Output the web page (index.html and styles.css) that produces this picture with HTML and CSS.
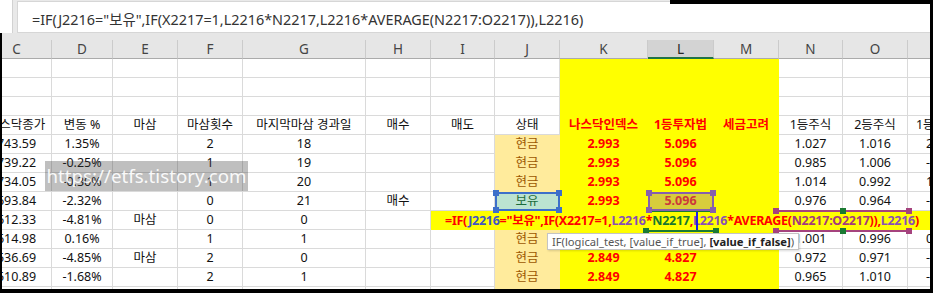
FILE: index.html
```html
<!DOCTYPE html>
<html lang="ko">
<head>
<meta charset="UTF-8">
<meta name="viewport" content="width=device-width, initial-scale=1.0">
<title>나스닥 1등투자법</title>
<link rel="stylesheet" href="styles.css">
</head>
<body>
<div class="screen">
  <div class="fbar">
    <div class="namebox"></div>
    <div class="fx">=IF(J2216="보유",IF(X2217=1,L2216*N2217,L2216*AVERAGE(N2217:O2217)),L2216)</div>
  </div>
  <div class="sheet-wrap">
    <div class="grid">
      <!-- column letters -->
      <div class="ch">C</div><div class="ch">D</div><div class="ch">E</div><div class="ch">F</div><div class="ch">G</div><div class="ch">H</div><div class="ch">I</div><div class="ch">J</div><div class="ch">K</div><div class="ch on">L</div><div class="ch">M</div><div class="ch">N</div><div class="ch">O</div><div class="ch">P</div>

      <!-- empty rows -->
      <div class="c"></div><div class="c"></div><div class="c"></div><div class="c"></div><div class="c"></div><div class="c"></div><div class="c"></div><div class="c"></div><div class="c y"></div><div class="c y"></div><div class="c y"></div><div class="c"></div><div class="c"></div><div class="c"></div>
      <div class="c"></div><div class="c"></div><div class="c"></div><div class="c"></div><div class="c"></div><div class="c"></div><div class="c"></div><div class="c"></div><div class="c y"></div><div class="c y"></div><div class="c y"></div><div class="c"></div><div class="c"></div><div class="c"></div>
      <div class="c"></div><div class="c"></div><div class="c"></div><div class="c"></div><div class="c"></div><div class="c"></div><div class="c"></div><div class="c"></div><div class="c y"></div><div class="c y"></div><div class="c y"></div><div class="c"></div><div class="c"></div><div class="c"></div>

      <!-- table header -->
      <div class="c">나스닥종가</div><div class="c">변동 %</div><div class="c">마삼</div><div class="c">마삼횟수</div><div class="c">마지막마삼 경과일</div><div class="c">매수</div><div class="c">매도</div><div class="c">상태</div><div class="c y rv">나스닥인덱스</div><div class="c y rv">1등투자법</div><div class="c y rv">세금고려</div><div class="c">1등주식</div><div class="c">2등주식</div><div class="c">1등수익률</div>

      <!-- data -->
      <div class="c">743.59</div><div class="c">1.35%</div><div class="c"></div><div class="c">2</div><div class="c">18</div><div class="c"></div><div class="c"></div><div class="c neu">현금</div><div class="c y rv">2.993</div><div class="c y rv">5.096</div><div class="c y"></div><div class="c">1.027</div><div class="c">1.016</div><div class="c pc">2.31%</div>
      <div class="c">739.22</div><div class="c">-0.25%</div><div class="c"></div><div class="c">1</div><div class="c">19</div><div class="c"></div><div class="c"></div><div class="c neu">현금</div><div class="c y rv">2.993</div><div class="c y rv">5.096</div><div class="c y"></div><div class="c">0.985</div><div class="c">1.006</div><div class="c pc">-0.47%</div>
      <div class="c">734.05</div><div class="c">-0.30%</div><div class="c"></div><div class="c">1</div><div class="c">20</div><div class="c"></div><div class="c"></div><div class="c neu">현금</div><div class="c y rv">2.993</div><div class="c y rv">5.096</div><div class="c y"></div><div class="c">1.014</div><div class="c">0.992</div><div class="c pc">1.12%</div>
      <div class="c">693.84</div><div class="c">-2.32%</div><div class="c"></div><div class="c">0</div><div class="c">21</div><div class="c">매수</div><div class="c"></div>
      <div class="c good">보유<span class="sel blue"><i class="hd tl"></i><i class="hd tr"></i><i class="hd bl"></i><i class="hd br"></i></span></div>
      <div class="c y rv">2.993</div>
      <div class="c y rv pick">5.096<span class="sel purple"><i class="hd tl"></i><i class="hd tr"></i><i class="hd bl"></i><i class="hd br"></i></span></div>
      <div class="c y"></div><div class="c">0.976</div><div class="c">0.964</div><div class="c pc">-2.47%</div>

      <div class="c">612.33</div><div class="c">-4.81%</div><div class="c">마삼</div><div class="c">0</div><div class="c">0</div><div class="c"></div>
      <div class="edit">=IF(<span class="r-j">J2216</span>="보유",IF(X2217=1,<span class="r-l">L2216</span>*<span class="r-n">N2217</span>,<span class="r-l">L2216</span>*AVERAGE(<span class="r-no">N2217:O2217</span>)),<span class="r-l">L2216</span>)
        <span class="rng green"><i class="hd bl"></i><i class="hd br"></i></span>
        <span class="rng plum"><i class="hd tl"></i><i class="hd tr"></i><i class="hd bl"></i><i class="hd br"></i><i class="hd tm"></i><i class="hd bm"></i></span>
        <span class="caret"></span>
        <span class="tip">IF(logical_test, [value_if_true], <b>[value_if_false]</b>)</span>
      </div>

      <div class="c">614.98</div><div class="c">0.16%</div><div class="c"></div><div class="c">1</div><div class="c">1</div><div class="c"></div><div class="c"></div><div class="c neu">현금</div><div class="c y rv">2.849</div><div class="c y rv">4.827</div><div class="c y"></div><div class="c">1.001</div><div class="c">0.996</div><div class="c pc">0.52%</div>
      <div class="c">536.69</div><div class="c">-4.85%</div><div class="c">마삼</div><div class="c">2</div><div class="c">0</div><div class="c"></div><div class="c"></div><div class="c neu">현금</div><div class="c y rv">2.849</div><div class="c y rv">4.827</div><div class="c y"></div><div class="c">0.972</div><div class="c">0.971</div><div class="c pc">-3.22%</div>
      <div class="c">510.89</div><div class="c">-1.68%</div><div class="c"></div><div class="c">2</div><div class="c">1</div><div class="c"></div><div class="c"></div><div class="c neu">현금</div><div class="c y rv">2.849</div><div class="c y rv">4.827</div><div class="c y"></div><div class="c">0.965</div><div class="c">1.010</div><div class="c pc">-1.62%</div>
      <div class="c">509.12</div><div class="c">-0.35%</div><div class="c"></div><div class="c">2</div><div class="c">2</div><div class="c"></div><div class="c"></div><div class="c neu">현금</div><div class="c y rv">2.849</div><div class="c y rv">4.827</div><div class="c y"></div><div class="c">0.996</div><div class="c">0.993</div><div class="c pc">-0.35%</div>
    </div>
    <div class="watermark">https://etfs.tistory.com</div>
  </div>
</div>
</body>
</html>
```

FILE: styles.css
```css
body {
  margin: 0;
  width: 933px;
  height: 293px;
  overflow: hidden;
  background: #000;
  font-family: "Noto Sans", "Noto Sans CJK KR", sans-serif;
}

.screen {
  width: 930px;
  height: 289px;
  display: flex;
  flex-direction: column;
}

/* formula bar */
.fbar {
  height: 33px;
  display: flex;
  gap: 4px;
  background: #e9e9e9;
  position: relative;
}

.fbar::after {
  content: "";
  position: absolute;
  top: 0;
  right: 0;
  width: 260px;
  height: 4px;
  background: #000;
}

.namebox {
  width: 12px;
  background: #fff;
  border-right: 1px solid #d2d2d2;
}

.fx {
  flex: 1;
  margin-top: 1px;
  background: #fff;
  border: 1px solid #d6d6d6;
  border-right: none;
  padding: 5px 0 0 14px;
  font-size: 14.4px;
  line-height: 26px;
  color: #333;
  white-space: nowrap;
}

/* sheet */
.sheet-wrap {
  flex: 1;
  margin-left: 2px;
  padding-top: 7px;
  background: #e6e6e6;
  overflow: hidden;
  position: relative;
}

.grid {
  margin-left: -20px;
  display: grid;
  grid-template-columns: 70px 61px 65px 65px 123px 65px 64px 65px 88px 66px 65px 64px 65px 70px;
  grid-auto-rows: 19px;
  font-size: 12.5px;
  color: #111;
}

.ch {
  box-sizing: border-box;
  background: #e6e6e6;
  border-right: 1px solid #cbcbcb;
  border-bottom: 1px solid #ababab;
  text-align: center;
  line-height: 18px;
  font-size: 13.5px;
  color: #444;
}

.ch.on {
  background: #d3d3d3;
  border-bottom: 2px solid #217346;
  color: #262626;
}

.c {
  box-sizing: border-box;
  background: #fff;
  border-right: 1px solid #dadada;
  border-bottom: 1px solid #dadada;
  text-align: center;
  line-height: 18px;
  white-space: nowrap;
  overflow: hidden;
}

.pc {
  text-align: left;
  padding-left: 18px;
}

.y {
  background: #ffff00;
  border-color: transparent;
}

.rv {
  color: #ff0000;
  font-weight: 700;
}

.neu {
  background: #ffeb9c;
  border-color: transparent;
  color: #9c5700;
}

.good {
  background: #bce3d1;
  border-color: transparent;
  color: #1c6b3a;
  position: relative;
  overflow: visible;
}

.pick {
  background: #d8cd3c;
  color: #cc3a3a;
  position: relative;
  overflow: visible;
}

/* selection boxes */
.sel {
  position: absolute;
  left: 0;
  top: 0;
  right: -1px;
  bottom: -1px;
  border: 2px solid;
  z-index: 3;
}

.blue { color: #3d6fc9; }
.purple { color: #8660ad; }

.hd {
  position: absolute;
  width: 6px;
  height: 6px;
  background: currentColor;
}

.hd.tl { left: -4px; top: -4px; }
.hd.tr { right: -4px; top: -4px; }
.hd.bl { left: -4px; bottom: -4px; }
.hd.br { right: -4px; bottom: -4px; }

/* cell being edited */
.edit {
  grid-column: 7 / 15;
  background: #ffff00;
  position: relative;
  z-index: 2;
  padding-left: 14px;
  line-height: 19px;
  font-weight: 700;
  letter-spacing: -0.27px;
  color: #ff0000;
  white-space: nowrap;
}

.r-j { color: #3f55c4; }
.r-l { color: #8a4fb6; }
.r-n { color: #17772f; }
.r-no { color: #a3397e; }

.rng {
  position: absolute;
  top: -1px;
  height: 18px;
  border-top: 2px solid;
  border-bottom: 2px solid;
  z-index: 3;
}

.green {
  left: 216px;
  width: 68px;
  color: #1b7a33;
}

.plum {
  left: 346px;
  width: 131px;
  color: #a5437e;
}

.hd.tm, .hd.bm {
  left: 63px;
  color: #1b7a33;
}

.hd.tm { top: -4px; }
.hd.bm { bottom: -4px; }

.caret {
  position: absolute;
  left: 265px;
  top: 0;
  width: 2px;
  height: 19px;
  background: #1f1fe6;
}

.tip {
  position: absolute;
  left: 116px;
  top: 22px;
  height: 15px;
  padding: 0 4px;
  background: #fff;
  border: 1px solid #c4c4c4;
  box-shadow: 1px 1px 2px rgba(0, 0, 0, 0.15);
  font-size: 11.2px;
  font-weight: 400;
  letter-spacing: 0;
  line-height: 15px;
  color: #555;
  z-index: 4;
}

.tip b {
  color: #222;
}

.watermark {
  position: absolute;
  left: 43px;
  top: 128px;
  width: 203px;
  height: 30px;
  background: rgba(60, 60, 60, 0.33);
  color: rgba(255, 255, 255, 0.92);
  font-size: 18.7px;
  line-height: 30px;
  text-align: center;
  z-index: 5;
}
```
